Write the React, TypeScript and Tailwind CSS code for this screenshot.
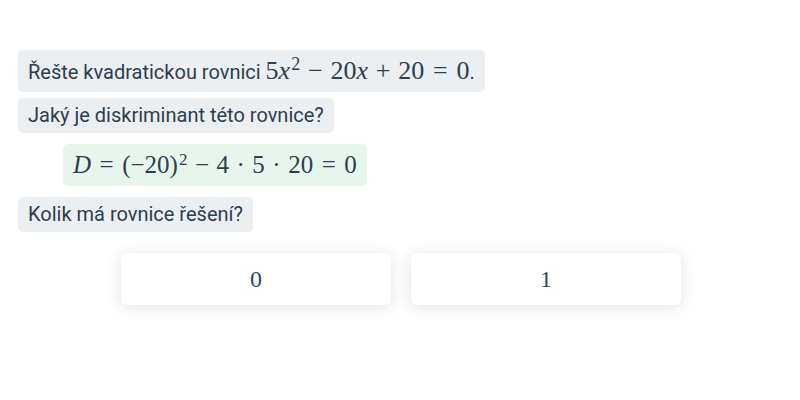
import React from "react";

const serif = "font-['Liberation_Serif','DejaVu_Serif',serif]";

function Bubble({ children }: { children: React.ReactNode }) {
  return (
    <div className="self-start rounded-[5px] bg-[#eceff1] px-[10px] text-[20px] leading-[35px] text-[#2c3e50]">
      {children}
    </div>
  );
}

// binary operator / relation with KaTeX-like spacing
function Bin({ children }: { children: React.ReactNode }) {
  return <span className="mx-[0.3em]">{children}</span>;
}

function Rel({ children }: { children: React.ReactNode }) {
  return <span className="mx-[0.34em]">{children}</span>;
}

function Choice({ label }: { label: string }) {
  return (
    <button
      className={`flex h-[52px] w-[270px] items-center justify-center rounded-[6px] bg-white text-[24px] text-[#34495e] shadow-[0_2px_16px_rgba(0,0,0,0.12)] ${serif}`}
    >
      {label}
    </button>
  );
}

export default function App() {
  return (
    <div className="min-h-[400px] w-[800px] bg-white pt-[50px] pl-[18px] font-['Roboto',sans-serif]">
      <div className="flex flex-col items-start">
        <div className="h-[42px] rounded-[5px] bg-[#eceff1] px-[10px] text-[20px] leading-[42px] text-[#2c3e50]">
          Řešte kvadratickou rovnici{" "}
          <span className={`text-[26px] ${serif}`}>
            5<i>x</i>
            <sup className="ml-[1px] text-[18px]">2</sup>
            <Bin>−</Bin>20<i>x</i>
            <Bin>+</Bin>20<Rel>=</Rel>0
          </span>
          .
        </div>
        <div className="mt-[6px]">
          <Bubble>Jaký je diskriminant této rovnice?</Bubble>
        </div>
        <div
          className={`mt-[11px] ml-[45px] h-[42px] rounded-[5px] bg-[#e6f6ec] px-[10px] text-[25px] leading-[42px] text-[#2c3e50] ${serif}`}
        >
          <i>D</i>
          <Rel>=</Rel>(−20)<sup className="ml-[1px] text-[17px]">2</sup>
          <Bin>−</Bin>4<Bin>·</Bin>5<Bin>·</Bin>20<Rel>=</Rel>0
        </div>
        <div className="mt-[11px]">
          <Bubble>Kolik má rovnice řešení?</Bubble>
        </div>
      </div>
      <div className="mt-[21px] -ml-[18px] flex justify-center gap-[20px] pl-[2px]">
        <Choice label="0" />
        <Choice label="1" />
      </div>
    </div>
  );
}
